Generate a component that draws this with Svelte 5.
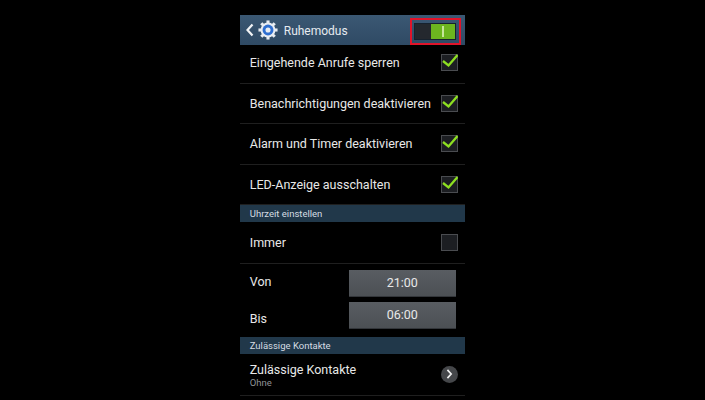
<script>
  const toggles = [
    { label: 'Eingehende Anrufe sperren', on: true },
    { label: 'Benachrichtigungen deaktivieren', on: true },
    { label: 'Alarm und Timer deaktivieren', on: true },
    { label: 'LED-Anzeige ausschalten', on: true },
  ];
</script>

{#snippet checkbox(on)}
  <span class="box">
    {#if on}
      <svg viewBox="0 0 17 17" width="17" height="17">
        <path d="M2 7 L7.5 11.5 L16.5 1" fill="none" stroke="#8ee021" stroke-width="2.3" />
      </svg>
    {/if}
  </span>
{/snippet}

<div class="screen">
  <div class="phone">
    <header class="bar">
      <svg class="back" viewBox="0 0 8 14" width="8" height="14">
        <path d="M6.5 1.5 L1.5 7 L6.5 12.5" fill="none" stroke="#f2f4f6" stroke-width="2.2" />
      </svg>
      <svg class="gear" viewBox="0 0 22 22" width="20" height="20">
        <circle cx="11" cy="11" r="8.2" fill="#e9edf2" />
        <g stroke="#e9edf2" stroke-width="3.4">
          <path d="M11 0.5 V21.5" />
          <path d="M0.5 11 H21.5" />
          <path d="M3.6 3.6 L18.4 18.4" />
          <path d="M18.4 3.6 L3.6 18.4" />
        </g>
        <circle cx="11" cy="11" r="6" fill="#2f6fd0" />
        <circle cx="11" cy="11" r="2.8" fill="#e9edf2" />
      </svg>
      <span class="title">Ruhemodus</span>
      <div class="master">
        <div class="track">
          <span class="off"></span>
          <span class="on"><i></i></span>
        </div>
      </div>
    </header>

    {#each toggles as t}
      <div class="row">
        <span class="label">{t.label}</span>
        {@render checkbox(t.on)}
      </div>
    {/each}

    <div class="section">Uhrzeit einstellen</div>

    <div class="row always">
      <span class="label">Immer</span>
      {@render checkbox(false)}
    </div>

    <div class="times">
      <div class="time">
        <span class="label von">Von</span>
        <button>21:00</button>
      </div>
      <div class="time">
        <span class="label bis">Bis</span>
        <button>06:00</button>
      </div>
    </div>

    <div class="section">Zulässige Kontakte</div>

    <div class="row contacts">
      <div class="stack">
        <span class="label">Zulässige Kontakte</span>
        <span class="sub">Ohne</span>
      </div>
      <span class="more">
        <svg viewBox="0 0 8 12" width="7" height="10">
          <path d="M1.5 1 L6 6 L1.5 11" fill="none" stroke="#f0f0f0" stroke-width="2" />
        </svg>
      </span>
    </div>
  </div>
</div>

<style>
  :global(body) {
    margin: 0;
    background: #000;
  }
  .screen {
    width: 705px;
    height: 400px;
    overflow: hidden;
    display: flex;
    justify-content: center;
    background: #000;
    font-family: Roboto, "Liberation Sans", sans-serif;
    color: #e8e8e8;
  }
  .phone {
    width: 225px;
    margin-top: 15px;
    margin-left: -0.5px;
    flex: none;
  }
  .bar {
    height: 30px;
    background: linear-gradient(#3b5873, #2f4a64);
    display: flex;
    align-items: center;
    padding-left: 6px;
    box-sizing: border-box;
  }
  .back {
    flex: none;
  }
  .gear {
    margin-left: 4px;
    flex: none;
  }
  .title {
    margin-left: 6px;
    padding-top: 2px;
    font-size: 12px;
    color: #e6ebf0;
  }
  .master {
    margin-left: auto;
    margin-right: 4px;
    width: 51px;
    height: 27px;
    margin-top: 2px;
    border: 2px solid #e0142a;
    box-sizing: border-box;
    display: flex;
    align-items: center;
    justify-content: center;
  }
  .track {
    display: flex;
    width: 42px;
    height: 17px;
    border: 1px solid #16222e;
    box-sizing: border-box;
  }
  .off {
    width: 16px;
    background: #24282e;
  }
  .on {
    flex: 1;
    background: #6cb51f;
    display: flex;
    align-items: center;
    justify-content: center;
  }
  .on i {
    width: 2px;
    height: 11px;
    background: #c5e59a;
  }
  .row {
    height: 40.33px;
    display: flex;
    align-items: center;
    justify-content: space-between;
    padding: 0 7px 0 10px;
    border-bottom: 1px solid #1f1f1f;
    box-sizing: border-box;
  }
  .bar + .row {
    height: 39px;
    padding-bottom: 4px;
  }
  .label {
    font-size: 12.5px;
  }
  .box {
    width: 17px;
    height: 17px;
    background: #1c1e22;
    border: 1px solid #4a4c50;
    box-sizing: border-box;
    display: flex;
    align-items: center;
    justify-content: center;
    flex: none;
  }
  .box svg {
    flex: none;
  }
  .section {
    height: 17px;
    line-height: 17px;
    padding-left: 10px;
    background: #21384a;
    font-size: 9.5px;
    color: #d5dce2;
  }
  .always {
    height: 42px;
    padding-top: 1px;
  }
  .times {
    padding: 6px 9px 8px 10px;
    display: flex;
    flex-direction: column;
    gap: 5px;
  }
  .time {
    display: flex;
    justify-content: space-between;
    align-items: center;
  }
  .von {
    padding-bottom: 3px;
  }
  .bis {
    padding-top: 7px;
  }
  button {
    width: 107px;
    height: 27px;
    padding: 0;
    border: none;
    border-bottom: 1px solid #33363a;
    background: linear-gradient(#595d62, #4c5054);
    color: #e8e8e8;
    font-family: inherit;
    font-size: 12.5px;
  }
  .contacts {
    height: 42px;
  }
  .stack {
    display: flex;
    flex-direction: column;
    padding-top: 2px;
  }
  .stack .label {
    line-height: 15px;
  }
  .sub {
    font-size: 9.5px;
    line-height: 12px;
    color: #8f9397;
  }
  .more {
    width: 17px;
    height: 17px;
    border-radius: 50%;
    background: #45474a;
    display: flex;
    align-items: center;
    justify-content: center;
  }
</style>
